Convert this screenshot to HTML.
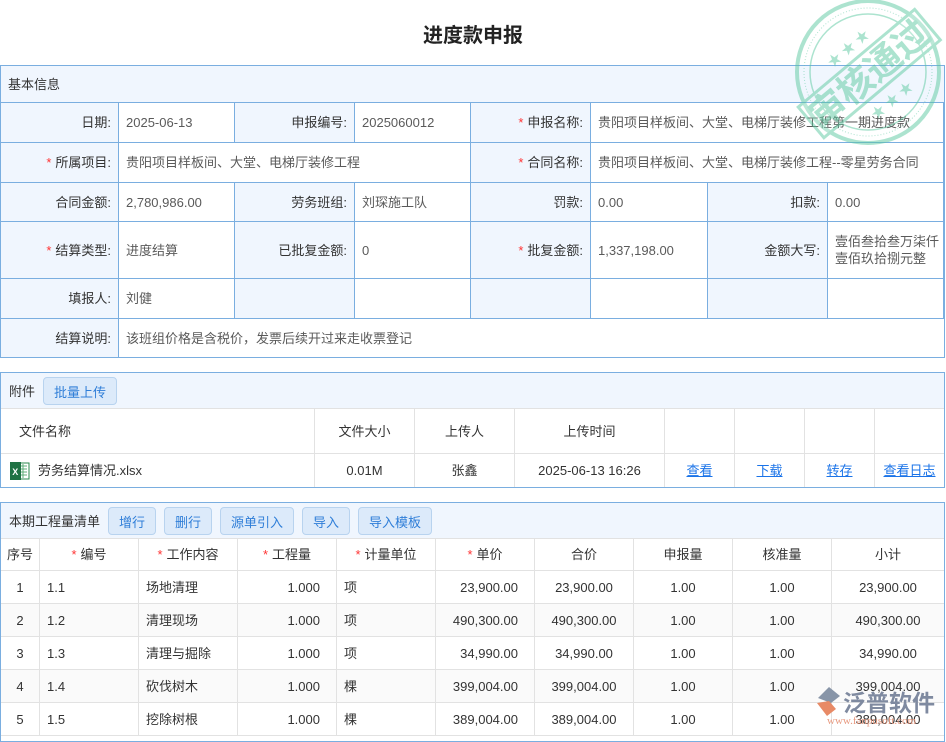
<!DOCTYPE html>
<html><head><meta charset="utf-8"><style>
*{margin:0;padding:0;box-sizing:border-box}
body{width:946px;height:734px;overflow:hidden;background:#fff;position:relative;font-family:"Liberation Sans","Noto Sans CJK SC",sans-serif;font-size:13px;color:#333}
.a{position:absolute}
.c{position:absolute;display:flex;align-items:center;padding:0 7px;line-height:17px}
.l{background:#f0f6fe;justify-content:flex-end;color:#333}
.v{background:#fff;color:#5a5a5a}
.b1{border-right:1px solid #7aaee0;border-bottom:1px solid #7aaee0}
.g{border-right:1px solid #e2e2e2;border-bottom:1px solid #e2e2e2;justify-content:center}
.s{color:#f33;margin-right:4px}
.btn{position:absolute;background:#dceafa;border:1px solid #b8d3ef;border-radius:4px;color:#2f7ed8;display:flex;align-items:center;justify-content:center;font-size:13px}
.lk{color:#1a73e8;text-decoration:underline}
.r{justify-content:flex-end;padding-right:16px}
.le{justify-content:flex-start}
</style></head><body>
<div class="a" style="left:0;top:19px;width:946px;text-align:center;font-size:20px;font-weight:bold;color:#222">进度款申报</div>

<div class="a" style="left:0;top:65px;width:945px;height:293px;border:1px solid #7aaee0;background:#f0f6fe"></div>
<div class="c" style="left:1px;top:66px;height:36px;color:#333">基本信息</div>
<div class="a" style="left:0;top:102px;width:945px;border-top:1px solid #7aaee0"></div>
<div class="c l b1" style="left:1px;top:103px;width:118px;height:40px">日期:</div>
<div class="c v b1" style="left:119px;top:103px;width:116px;height:40px">2025-06-13</div>
<div class="c l b1" style="left:235px;top:103px;width:120px;height:40px">申报编号:</div>
<div class="c v b1" style="left:355px;top:103px;width:116px;height:40px">2025060012</div>
<div class="c l b1" style="left:471px;top:103px;width:120px;height:40px"><span class="s">*</span>申报名称:</div>
<div class="c v b1" style="left:591px;top:103px;width:353px;height:40px">贵阳项目样板间、大堂、电梯厅装修工程第一期进度款</div>
<div class="c l b1" style="left:1px;top:143px;width:118px;height:40px"><span class="s">*</span>所属项目:</div>
<div class="c v b1" style="left:119px;top:143px;width:352px;height:40px">贵阳项目样板间、大堂、电梯厅装修工程</div>
<div class="c l b1" style="left:471px;top:143px;width:120px;height:40px"><span class="s">*</span>合同名称:</div>
<div class="c v b1" style="left:591px;top:143px;width:353px;height:40px">贵阳项目样板间、大堂、电梯厅装修工程--零星劳务合同</div>
<div class="c l b1" style="left:1px;top:183px;width:118px;height:39px">合同金额:</div>
<div class="c v b1" style="left:119px;top:183px;width:116px;height:39px">2,780,986.00</div>
<div class="c l b1" style="left:235px;top:183px;width:120px;height:39px">劳务班组:</div>
<div class="c v b1" style="left:355px;top:183px;width:116px;height:39px">刘琛施工队</div>
<div class="c l b1" style="left:471px;top:183px;width:120px;height:39px">罚款:</div>
<div class="c v b1" style="left:591px;top:183px;width:117px;height:39px">0.00</div>
<div class="c l b1" style="left:708px;top:183px;width:120px;height:39px">扣款:</div>
<div class="c v b1" style="left:828px;top:183px;width:116px;height:39px">0.00</div>
<div class="c l b1" style="left:1px;top:222px;width:118px;height:57px"><span class="s">*</span>结算类型:</div>
<div class="c v b1" style="left:119px;top:222px;width:116px;height:57px">进度结算</div>
<div class="c l b1" style="left:235px;top:222px;width:120px;height:57px">已批复金额:</div>
<div class="c v b1" style="left:355px;top:222px;width:116px;height:57px">0</div>
<div class="c l b1" style="left:471px;top:222px;width:120px;height:57px"><span class="s">*</span>批复金额:</div>
<div class="c v b1" style="left:591px;top:222px;width:117px;height:57px">1,337,198.00</div>
<div class="c l b1" style="left:708px;top:222px;width:120px;height:57px">金额大写:</div>
<div class="c v b1" style="left:828px;top:222px;width:116px;height:57px;padding-right:2px">壹佰叁拾叁万柒仟壹佰玖拾捌元整</div>
<div class="c l b1" style="left:1px;top:279px;width:118px;height:40px">填报人:</div>
<div class="c v b1" style="left:119px;top:279px;width:116px;height:40px">刘健</div>
<div class="c l b1" style="left:235px;top:279px;width:120px;height:40px"></div>
<div class="c v b1" style="left:355px;top:279px;width:116px;height:40px"></div>
<div class="c l b1" style="left:471px;top:279px;width:120px;height:40px"></div>
<div class="c v b1" style="left:591px;top:279px;width:117px;height:40px"></div>
<div class="c l b1" style="left:708px;top:279px;width:120px;height:40px"></div>
<div class="c v b1" style="left:828px;top:279px;width:116px;height:40px"></div>
<div class="c l b1" style="left:1px;top:319px;width:118px;height:38px;border-bottom:none">结算说明:</div>
<div class="c v" style="left:119px;top:319px;width:825px;height:38px">该班组价格是含税价，发票后续开过来走收票登记</div>

<div class="a" style="left:0;top:372px;width:945px;height:116px;border:1px solid #7aaee0;background:#fff"></div>
<div class="a" style="left:1px;top:373px;width:943px;height:36px;background:#f0f6fe;border-bottom:1px solid #e2e2e2"></div>
<div class="c" style="left:2px;top:373px;height:36px">附件</div>
<div class="btn" style="left:43px;top:377px;width:74px;height:28px">批量上传</div>
<div class="c g" style="left:1px;top:409px;width:314px;height:45px;justify-content:flex-start;padding-left:18px">文件名称</div>
<div class="c g" style="left:315px;top:409px;width:100px;height:45px">文件大小</div>
<div class="c g" style="left:415px;top:409px;width:100px;height:45px">上传人</div>
<div class="c g" style="left:515px;top:409px;width:150px;height:45px">上传时间</div>
<div class="c g" style="left:665px;top:409px;width:70px;height:45px"></div>
<div class="c g" style="left:735px;top:409px;width:70px;height:45px"></div>
<div class="c g" style="left:805px;top:409px;width:70px;height:45px"></div>
<div class="c g" style="left:875px;top:409px;width:69px;height:45px;border-right:none"></div>
<div class="c g" style="left:1px;top:454px;width:314px;height:33px;justify-content:flex-start;padding-left:8px;border-bottom:none">
<svg width="21" height="20" viewBox="0 0 21 20" style="margin-right:8px"><rect x="7" y="2" width="13" height="16" fill="#fff" stroke="#2b8a4d"/><path d="M10 5h8M10 8h8M10 11h8M10 14h8M14 3v14" stroke="#5fae78" stroke-width="1"/><rect x="1" y="1" width="11" height="18" fill="#1f7244"/><text x="3.2" y="14" font-size="9" fill="#fff" font-family="Liberation Sans" font-weight="bold">X</text></svg>劳务结算情况.xlsx</div>
<div class="c g" style="left:315px;top:454px;width:100px;height:33px;border-bottom:none">0.01M</div>
<div class="c g" style="left:415px;top:454px;width:100px;height:33px;border-bottom:none">张鑫</div>
<div class="c g" style="left:515px;top:454px;width:150px;height:33px;border-bottom:none">2025-06-13 16:26</div>
<div class="c g" style="left:665px;top:454px;width:70px;height:33px;border-bottom:none"><span class="lk">查看</span></div>
<div class="c g" style="left:735px;top:454px;width:70px;height:33px;border-bottom:none"><span class="lk">下载</span></div>
<div class="c g" style="left:805px;top:454px;width:70px;height:33px;border-bottom:none"><span class="lk">转存</span></div>
<div class="c g" style="left:875px;top:454px;width:69px;height:33px;border:none"><span class="lk">查看日志</span></div>

<div class="a" style="left:0;top:502px;width:945px;height:240px;border:1px solid #7aaee0;background:#fff"></div>
<div class="a" style="left:1px;top:503px;width:943px;height:36px;background:#f0f6fe;border-bottom:1px solid #e2e2e2"></div>
<div class="c" style="left:2px;top:503px;height:36px">本期工程量清单</div>
<div class="btn" style="left:108px;top:507px;width:48px;height:28px">增行</div>
<div class="btn" style="left:164px;top:507px;width:48px;height:28px">删行</div>
<div class="btn" style="left:220px;top:507px;width:74px;height:28px">源单引入</div>
<div class="btn" style="left:302px;top:507px;width:48px;height:28px">导入</div>
<div class="btn" style="left:358px;top:507px;width:74px;height:28px">导入模板</div>

<div class="c g" style="left:1px;top:539px;width:39px;height:32px;padding:0">序号</div>
<div class="c g" style="left:40px;top:539px;width:99px;height:32px"><span class="s">*</span>编号</div>
<div class="c g" style="left:139px;top:539px;width:99px;height:32px"><span class="s">*</span>工作内容</div>
<div class="c g" style="left:238px;top:539px;width:99px;height:32px"><span class="s">*</span>工程量</div>
<div class="c g" style="left:337px;top:539px;width:99px;height:32px"><span class="s">*</span>计量单位</div>
<div class="c g" style="left:436px;top:539px;width:99px;height:32px"><span class="s">*</span>单价</div>
<div class="c g" style="left:535px;top:539px;width:99px;height:32px">合价</div>
<div class="c g" style="left:634px;top:539px;width:99px;height:32px">申报量</div>
<div class="c g" style="left:733px;top:539px;width:99px;height:32px">核准量</div>
<div class="c g" style="left:832px;top:539px;width:112px;height:32px;border-right:none">小计</div>

<div id="rows"></div>
<script>
var d=[["1","1.1","场地清理","项","23,900.00"],["2","1.2","清理现场","项","490,300.00"],["3","1.3","清理与掘除","项","34,990.00"],["4","1.4","砍伐树木","棵","399,004.00"],["5","1.5","挖除树根","棵","389,004.00"]];
var h="";
d.forEach(function(r,i){var t=571+i*33,bg=i%2?"#fafafa":"#fff",s="top:"+t+"px;height:33px;background:"+bg+";";
h+='<div class="c g" style="left:1px;width:39px;padding:0;'+s+'">'+r[0]+'</div>';
h+='<div class="c g le" style="left:40px;width:99px;'+s+'">'+r[1]+'</div>';
h+='<div class="c g le" style="left:139px;width:99px;'+s+'">'+r[2]+'</div>';
h+='<div class="c g r" style="left:238px;width:99px;'+s+'">1.000</div>';
h+='<div class="c g le" style="left:337px;width:99px;'+s+'">'+r[3]+'</div>';
h+='<div class="c g r" style="left:436px;width:99px;'+s+'">'+r[4]+'</div>';
h+='<div class="c g" style="left:535px;width:99px;'+s+'">'+r[4]+'</div>';
h+='<div class="c g" style="left:634px;width:99px;'+s+'">1.00</div>';
h+='<div class="c g" style="left:733px;width:99px;'+s+'">1.00</div>';
h+='<div class="c g" style="left:832px;width:112px;border-right:none;'+s+'">'+r[4]+'</div>';});
document.getElementById("rows").innerHTML=h;
</script>

<svg class="a" style="left:790px;top:0" width="156" height="150" viewBox="0 0 156 150">
<g opacity="0.5" fill="none" stroke="#5cc9a0">
<circle cx="78" cy="72" r="71" stroke-width="4"/>
<circle cx="78" cy="72" r="58" stroke-width="1.5"/>
<circle cx="78" cy="72" r="64" stroke-width="1" stroke-dasharray="1 2"/>
<g transform="rotate(-40 78 72)">
<rect x="2" y="54" width="152" height="40" fill="#fff" fill-opacity="0.2" stroke-width="3"/>
<text x="78" y="87" text-anchor="middle" font-size="36" font-weight="bold" fill="#5cc9a0" stroke="none" font-family="Liberation Sans,Noto Sans CJK SC,sans-serif">审核通过</text>
<text x="78" y="46" text-anchor="middle" font-size="14" fill="#5cc9a0" stroke="none">★ ★ ★</text>
<text x="78" y="114" text-anchor="middle" font-size="14" fill="#5cc9a0" stroke="none">★ ★ ★</text>
</g></g></svg>

<svg class="a" style="left:815px;top:684px" width="131" height="50" viewBox="0 0 131 50">
<path d="M3 14 L14 3 L25 12 L16 19 Z" fill="#8895a8"/>
<path d="M2 19 L12 32 L21 25 L14 17 Z" fill="#e88a66"/>
<text x="28" y="27" font-size="23" fill="#7f8aa0" font-family="Noto Sans CJK SC,sans-serif" font-weight="bold">泛普软件</text>
<text x="12" y="40" font-size="11" fill="#e89a80" font-family="Liberation Serif,serif">www.fanpusoft.com</text>
</svg>
</body></html>
